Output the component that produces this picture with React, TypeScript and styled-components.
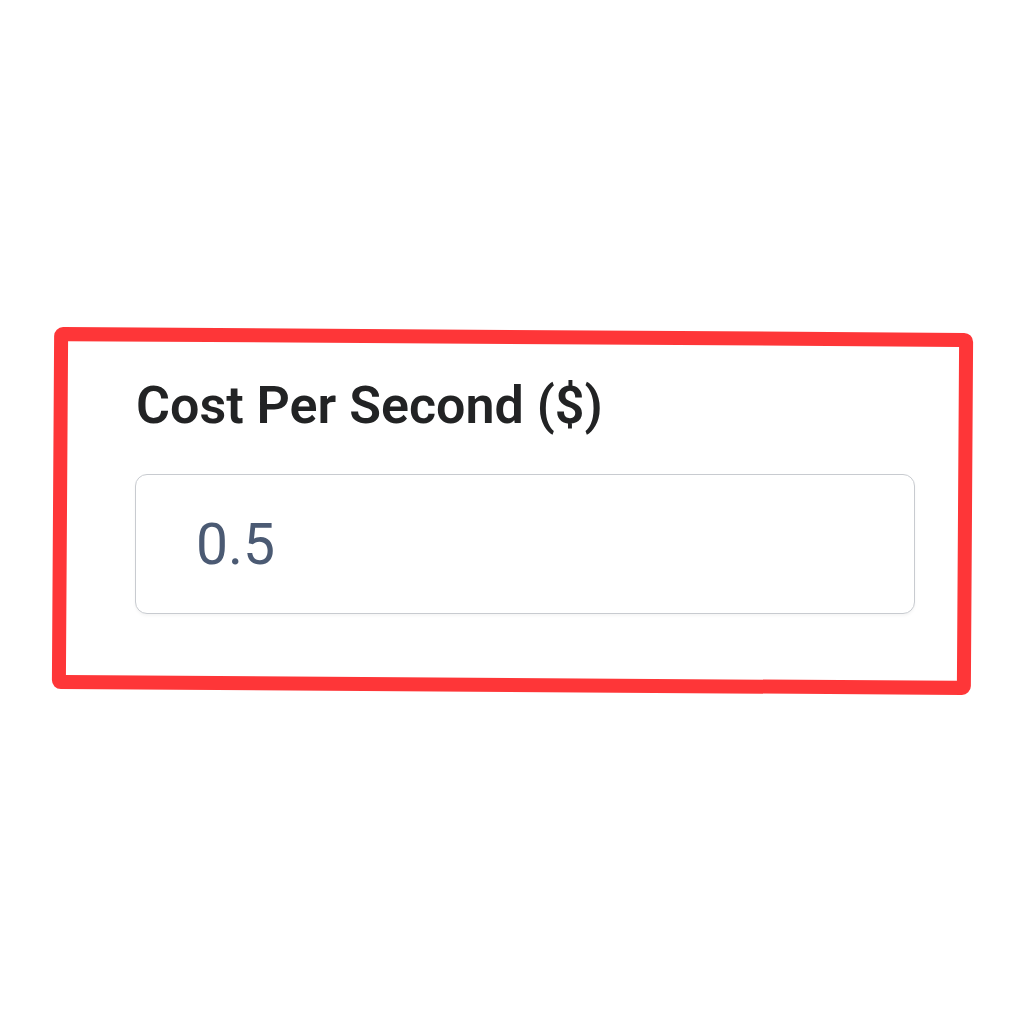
import styled, { createGlobalStyle } from "styled-components";

const GlobalStyle = createGlobalStyle`
  html, body {
    margin: 0;
    padding: 0;
    background: #ffffff;
  }
  body {
    font-family: Roboto, "Liberation Sans", Arial, sans-serif;
  }
`;

const Page = styled.div`
  width: 1024px;
  height: 1024px;
  display: flex;
  flex-direction: column;
  align-items: flex-start;
  padding-top: 330px;
  padding-left: 53px;
  box-sizing: border-box;
`;

const Field = styled.div`
  position: relative;
  width: 919px;
  height: 362px;
  box-sizing: border-box;
  padding: 46px 57px 0 82px;
  display: flex;
  flex-direction: column;
  gap: 38px;
`;

// hand-drawn highlight around the field, slightly tilted
const Highlight = styled.div`
  position: absolute;
  inset: 0;
  border: 14px solid #fe3638;
  border-radius: 9px;
  transform: rotate(0.37deg);
  pointer-events: none;
`;

const Label = styled.label`
  font-family: Roboto, "Liberation Sans", Arial, sans-serif;
  font-size: 52px;
  line-height: 60px;
  font-weight: 600;
  color: #222324;
  padding-left: 1px;
`;

const Input = styled.input`
  width: 780px;
  height: 140px;
  box-sizing: border-box;
  border: 1.5px solid #c8cbd0;
  border-radius: 12px;
  box-shadow: 0 2px 3px rgba(0, 0, 0, 0.04);
  padding: 0 0 0 60px;
  font-family: Roboto, "Liberation Sans", Arial, sans-serif;
  font-size: 57px;
  font-weight: 400;
  color: #4b5a73;
  background: #ffffff;
  outline: none;
`;

export default function App() {
  return (
    <>
      <GlobalStyle />
      <Page>
        <Field>
          <Label htmlFor="cost">Cost Per Second ($)</Label>
          <Input id="cost" defaultValue="0.5" />
          <Highlight />
        </Field>
      </Page>
    </>
  );
}
